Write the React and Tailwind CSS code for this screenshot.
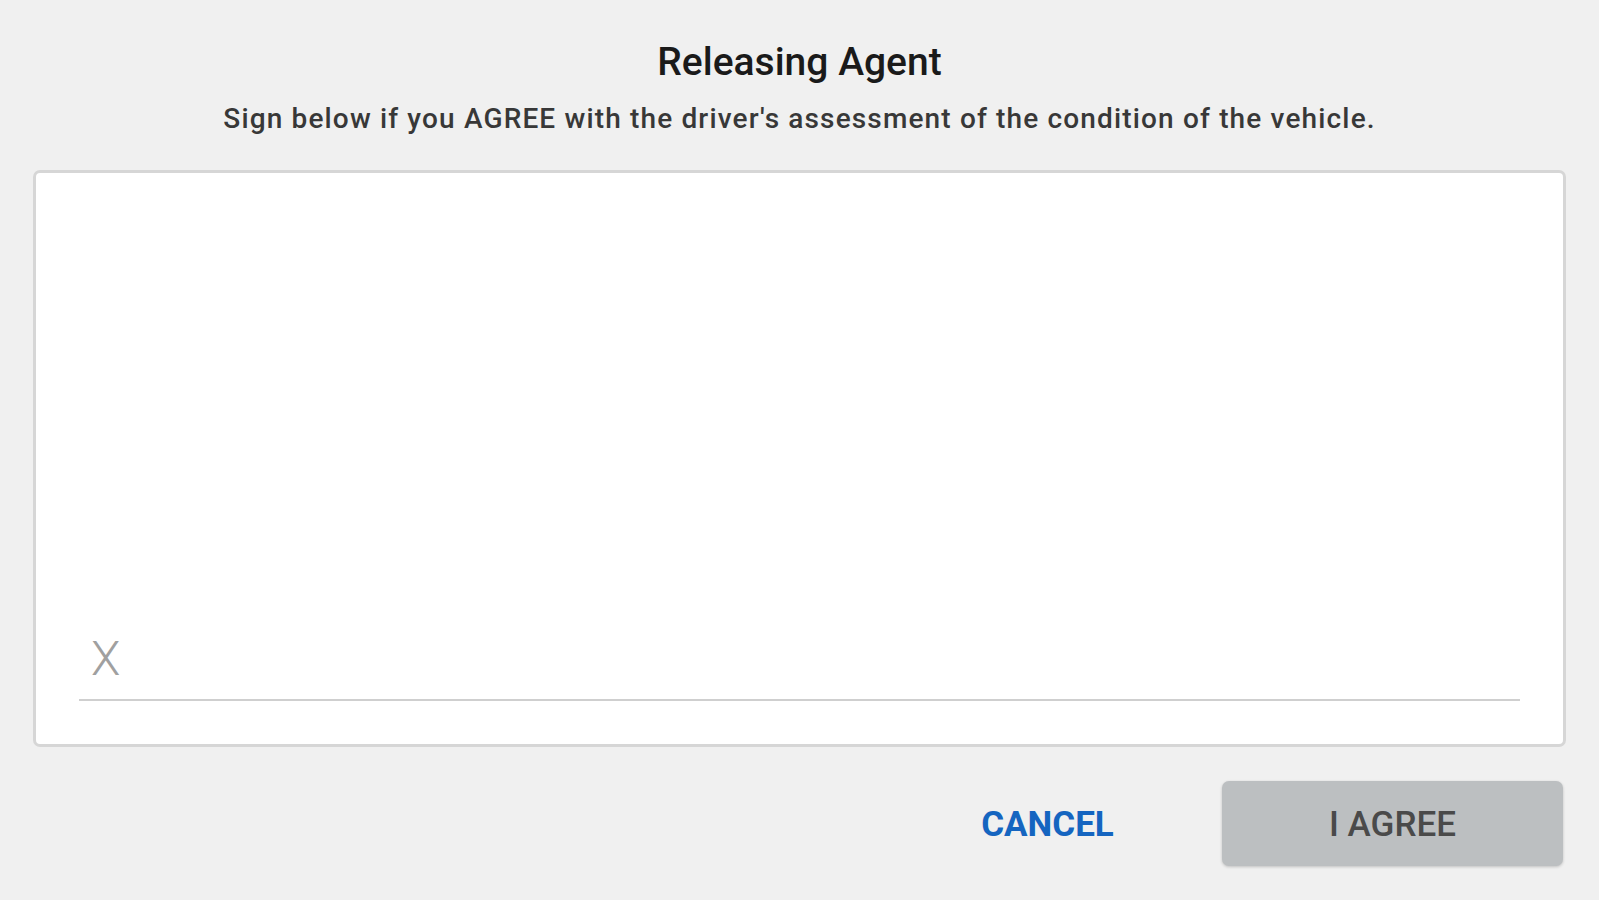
export default function App() {
  return (
    <div
      className="w-[1599px] h-[900px] bg-[#f0f0f0] flex flex-col overflow-hidden"
      style={{ fontFamily: "Roboto, 'Liberation Sans', sans-serif" }}
    >
      <h1 className="pt-[39px] text-center text-[39px] leading-[46px] font-medium text-[#1a1a1a]">
        Releasing Agent
      </h1>
      <p className="mt-[17px] text-center text-[28px] leading-[34px] font-medium tracking-[1.15px] text-[#383838]">
        Sign below if you AGREE with the driver's assessment of the condition of the vehicle.
      </p>
      <div className="mt-[34px] mx-[33px] h-[577px] bg-white border-[3px] border-[#d6d6d6] rounded-[7px] flex flex-col">
        <div className="flex-1" />
        <div className="px-[43px] pb-[43px]">
          <div className="pl-[12px] text-[48px] leading-[48px] font-light text-[#a0a0a0]">X</div>
          <div className="mt-[16px] h-[2px] bg-[#cfcfcf]" />
        </div>
      </div>
      <div className="mt-[34px] flex justify-end pr-[36px] gap-[4px]">
        <button className="w-[341px] h-[85px] pt-[3px] text-[35px] font-bold text-[#1565c0]">
          CANCEL
        </button>
        <button className="w-[341px] h-[85px] pt-[3px] rounded-[7px] bg-[#bcbfc1] text-[35px] font-medium text-[#4a4a4a] shadow-[0_1px_3px_rgba(0,0,0,0.2)]">
          I AGREE
        </button>
      </div>
    </div>
  );
}
